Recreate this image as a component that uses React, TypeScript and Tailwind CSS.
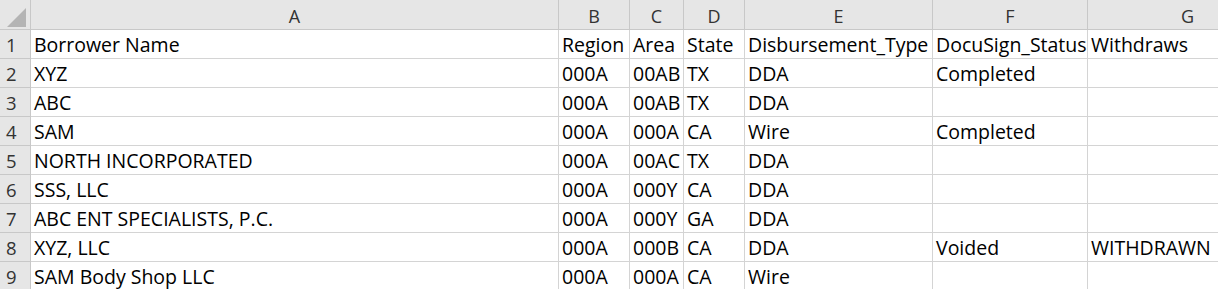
const columns = [
  { letter: "A", width: "w-[528px]" },
  { letter: "B", width: "w-[71px]" },
  { letter: "C", width: "w-[54px]" },
  { letter: "D", width: "w-[61px]" },
  { letter: "E", width: "w-[188px]" },
  { letter: "F", width: "w-[155px]" },
  { letter: "G", width: "w-[200px]" },
];

const rows = [
  ["Borrower Name", "Region", "Area", "State", "Disbursement_Type", "DocuSign_Status", "Withdraws"],
  ["XYZ", "000A", "00AB", "TX", "DDA", "Completed", ""],
  ["ABC", "000A", "00AB", "TX", "DDA", "", ""],
  ["SAM", "000A", "000A", "CA", "Wire", "Completed", ""],
  ["NORTH INCORPORATED", "000A", "00AC", "TX", "DDA", "", ""],
  ["SSS, LLC", "000A", "000Y", "CA", "DDA", "", ""],
  ["ABC ENT SPECIALISTS, P.C.", "000A", "000Y", "GA", "DDA", "", ""],
  ["XYZ, LLC", "000A", "000B", "CA", "DDA", "Voided", "WITHDRAWN"],
  ["SAM Body Shop LLC", "000A", "000A", "CA", "Wire", "", ""],
];

const App = () => {
  return (
    <div className="w-full h-[289px] overflow-hidden bg-white font-['Open_Sans',sans-serif] text-black">
      {/* Column headers */}
      <div className="flex h-[30px] bg-[#e6e6e6] border-b border-[#c8c8c8]">
        <div className="w-[31px] shrink-0 border-r border-[#c8c8c8] relative">
          <svg className="absolute left-0 top-0" width="30" height="29" viewBox="0 0 30 29">
            <polygon points="7,27 26,27 26,8" fill="#b4b4b4" />
          </svg>
        </div>
        {columns.map((col) => (
          <div
            key={col.letter}
            className={`${col.width} shrink-0 border-r border-[#c8c8c8] flex items-center justify-center pt-[3px] text-[18px] text-[#333]`}
          >
            {col.letter}
          </div>
        ))}
      </div>

      {/* Rows */}
      {rows.map((row, i) => (
        <div key={i} className="flex h-[29px]">
          <div className="w-[31px] shrink-0 bg-[#e6e6e6] border-r border-b border-[#c8c8c8] pl-[6px] leading-[30px] text-[18.5px] text-[#333] overflow-hidden">
            {i + 1}
          </div>
          {row.map((cell, j) => (
            <div
              key={j}
              className={`${columns[j].width} shrink-0 border-r border-b border-[#d4d4d4] pl-[3px] leading-[30px] text-[19.5px] whitespace-nowrap overflow-hidden`}
            >
              {cell}
            </div>
          ))}
        </div>
      ))}
    </div>
  );
};

export default App;
